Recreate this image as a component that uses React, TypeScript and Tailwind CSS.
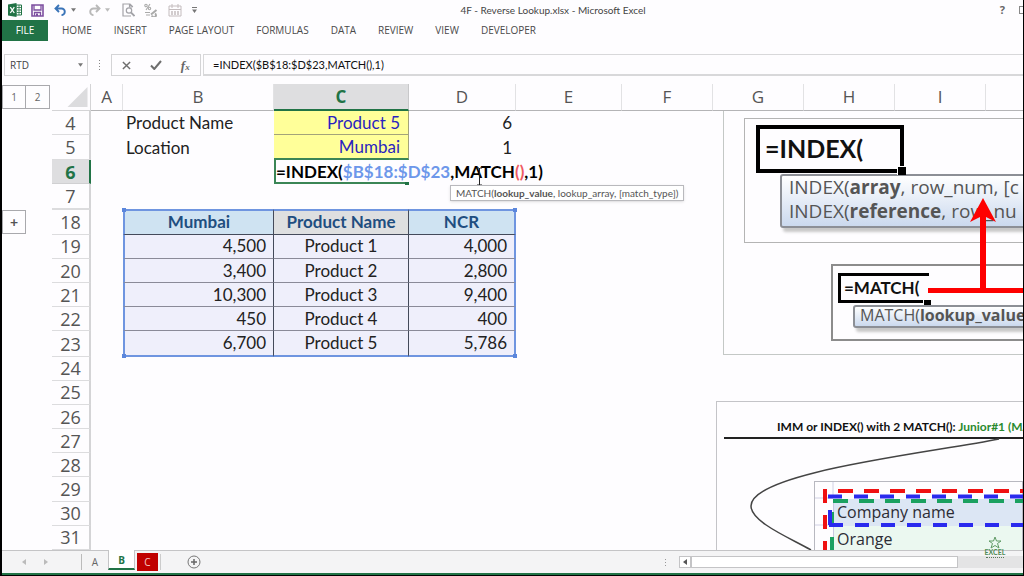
// src/App.tsx
import React, { useState } from "react";

const UI = "font-['Open_Sans','Noto_Sans',sans-serif]";
const CELL = "font-['Lato','Noto_Sans',sans-serif]";

const menus = ["HOME", "INSERT", "PAGE LAYOUT", "FORMULAS", "DATA", "REVIEW", "VIEW", "DEVELOPER"];

const columns = [
  { name: "A", width: "w-[32px]" },
  { name: "B", width: "w-[151px]" },
  { name: "C", width: "w-[135px]" },
  { name: "D", width: "w-[107px]" },
  { name: "E", width: "w-[106px]" },
  { name: "F", width: "w-[91px]" },
  { name: "G", width: "w-[91px]" },
  { name: "H", width: "w-[91px]" },
  { name: "I", width: "w-[91px]" },
];

const sales = [
  { row: 19, mumbai: "4,500", product: "Product 1", ncr: "4,000" },
  { row: 20, mumbai: "3,400", product: "Product 2", ncr: "2,800" },
  { row: 21, mumbai: "10,300", product: "Product 3", ncr: "9,400" },
  { row: 22, mumbai: "450", product: "Product 4", ncr: "400" },
  { row: 23, mumbai: "6,700", product: "Product 5", ncr: "5,786" },
];

const emptyRows = [24, 25, 26, 27, 28, 29, 30, 31];

function Caret({ className }: { className: string }) {
  return (
    <svg viewBox="0 0 6 4" className={`w-[5px] h-[4px] ${className}`}>
      <path d="M0 0h6L3 4z" fill="currentColor" />
    </svg>
  );
}

function QuickAccess() {
  return (
    <div className="w-[196px] shrink-0 flex items-center pl-[6px]">
      <svg viewBox="0 0 14 14" className="w-[14px] h-[14px] mr-[9px]">
        <path d="M8 2h5.500v10H8z" fill="#fff" stroke="#217346" strokeWidth="1" />
        <path d="M9 4.500h4M9 7h4M9 9.500h4M11 2v10" stroke="#217346" strokeWidth=".8" />
        <path d="M0 1.500L8.500 0v14L0 12.500z" fill="#217346" />
        <path d="M2.300 4.200l4 5.800M6.300 4.200l-4 5.800" stroke="#fff" strokeWidth="1.300" />
      </svg>
      <button aria-label="Save" className="mr-[10px]">
        <svg viewBox="0 0 13 13" className="w-[13px] h-[13px]">
          <path d="M1 1h11v11H1z" fill="#fff" stroke="#7d4fa0" strokeWidth="1.600" />
          <path d="M3 1v5h7V1M3.500 12V8.500h6V12" fill="none" stroke="#7d4fa0" strokeWidth="1.300" />
          <path d="M5 9.500h2V12H5z" fill="#7d4fa0" />
        </svg>
      </button>
      <button aria-label="Undo" className="flex items-center mr-[12px]">
        <svg viewBox="0 0 13 12" className="w-[13px] h-[12px]">
          <path d="M5 1L1.500 4.500L5 8M2 4.500h5.500a3.300 3.300 0 0 1 0 6.600" fill="none" stroke="#3a74b8" strokeWidth="1.900" />
        </svg>
        <Caret className="ml-[4px] text-[#777]" />
      </button>
      <button aria-label="Redo" className="flex items-center mr-[12px]">
        <svg viewBox="0 0 13 12" className="w-[13px] h-[12px]">
          <path d="M8 1l3.500 3.500L8 8M11 4.500H5.500a3.300 3.300 0 0 0 0 6.600" fill="none" stroke="#b9b9b9" strokeWidth="1.900" />
        </svg>
        <Caret className="ml-[4px] text-[#bbb]" />
      </button>
      <button aria-label="Print preview" className="mr-[9px]">
        <svg viewBox="0 0 13 14" className="w-[13px] h-[14px]" fill="none" stroke="#a3a3a8" strokeWidth="1.200">
          <path d="M10.500 4V3.500L8 1H1v12h8M7.500 1v3h3" />
          <circle cx="7" cy="7.500" r="2.700" />
          <path d="M9 9.500l3.500 3.500" strokeWidth="1.800" />
        </svg>
      </button>
      <button aria-label="Percent style" className="mr-[10px]">
        <svg viewBox="0 0 14 14" className="w-[14px] h-[14px]" fill="none" stroke="#aaa" strokeWidth="1.100">
          <circle cx="2" cy="2.500" r="1.200" />
          <circle cx="5.500" cy="5.500" r="1.200" />
          <path d="M6 1L2 7M1 9.500h5M2 12h4" />
          <path d="M7 11.500L12.500 7M8 12.500a2 2 0 1 0 3-2" strokeWidth="2" />
        </svg>
      </button>
      <button aria-label="Calendar" className="mr-[10px]">
        <svg viewBox="0 0 14 13" className="w-[14px] h-[13px]" fill="none" stroke="#c4bcbe">
          <path d="M1 2h12v10H1zM1 5.500h12M4 0v4M10 0v4" />
          <path d="M3 8h2M6 8h2M9 8h2M3 10h2M6 10h2M9 10h2" strokeWidth="1.300" />
        </svg>
      </button>
      <button aria-label="Customize toolbar">
        <svg viewBox="0 0 5 6" className="w-[5px] h-[6px]">
          <path d="M0 0h5v1H0zM0 2.500h5L2.500 6z" fill="#777" />
        </svg>
      </button>
    </div>
  );
}

function TitleBar() {
  return (
    <header className="h-[20px] shrink-0 flex items-center text-[10px] text-[#444]">
      <QuickAccess />
      <h1 className={`flex-1 text-center ${CELL}`}>4F - Reverse Lookup.xlsx - Microsoft Excel</h1>
      <div className="w-[115px] shrink-0 flex justify-end items-center gap-[14px] overflow-hidden">
        <button aria-label="Help" className="text-[11px] font-bold text-[#666]">?</button>
        <button aria-label="Ribbon display" className="w-[4px] h-[8px] border border-r-0 border-[#888]" />
      </div>
    </header>
  );
}

function Ribbon() {
  return (
    <nav className="h-[21px] shrink-0 flex items-stretch text-[10px] text-[#4a4a4a]">
      <button className="w-[46px] bg-[#217346] text-white">FILE</button>
      <div className="flex pl-[3px]">
        {menus.map((m) => (
          <button key={m} className="px-[11px] whitespace-nowrap">
            {m}
          </button>
        ))}
      </div>
    </nav>
  );
}

function FormulaBar() {
  const [formula, setFormula] = useState("=INDEX($B$18:$D$23,MATCH(),1)");
  return (
    <div className="h-[22px] mt-[13px] mb-[8px] shrink-0 flex items-stretch text-[11px] text-[#444]">
      <div className="ml-[2px] w-[84px] flex items-center border border-[#d4d4d6] pr-1">
        <input aria-label="Name box" defaultValue="RTD" className="min-w-0 flex-1 pl-[5px] text-[10px] outline-none" />
        <button aria-label="Open name list">
          <Caret className="text-[#777]" />
        </button>
      </div>
      <div className="w-[23px] flex flex-col items-center justify-center gap-[2px]">
        <i className="size-px bg-[#888]" />
        <i className="size-px bg-[#888]" />
        <i className="size-px bg-[#888]" />
        <i className="size-px bg-[#888]" />
      </div>
      <div className="w-[90px] flex items-center justify-around px-[1px] border border-[#d4d4d6]">
        <button aria-label="Cancel">
          <svg viewBox="0 0 10 10" className="w-[9px] h-[9px]">
            <path d="M1 1l8 8M9 1L1 9" stroke="#6e6e6e" strokeWidth="1.600" />
          </svg>
        </button>
        <button aria-label="Enter">
          <svg viewBox="0 0 12 10" className="w-[12px] h-[10px]">
            <path d="M1 5.500L4.300 9L11 1" fill="none" stroke="#6e6e6e" strokeWidth="2" />
          </svg>
        </button>
        <button aria-label="Insert function" className="font-['Liberation_Serif',serif] italic font-bold text-[13px] leading-none text-[#666]">
          f<span className="text-[9px]">x</span>
        </button>
      </div>
      <input
        aria-label="Formula bar"
        value={formula}
        onChange={(e) => setFormula(e.target.value)}
        className="ml-[2px] flex-1 min-w-0 border border-r-0 border-b-2 border-[#d8d8da] pl-[9px] pt-px font-['Lato',sans-serif] text-[11px] text-[#111] outline-none"
      />
    </div>
  );
}

function RowHead({ n, active }: { n: number; active?: boolean }) {
  const outline = n === 18;
  return (
    <>
      <td className="p-0">
        {outline && (
          <button aria-label="Expand rows" className="block w-[24px] h-[24px] border border-[#a9a9ad] text-[14px] font-bold leading-none text-[#555]">
            +
          </button>
        )}
      </td>
      <th
        scope="row"
        className={`p-0 border-b text-center text-[18px] leading-[22px] ${UI} ${
          active
            ? "bg-[#dedee0] border-[#d0d0d2] border-r-2 border-r-[#217346] font-bold text-[#217346]"
            : "border-[#dcdcde] border-r-2 border-r-[#d4d4d6] font-normal text-[#555]"
        } ${outline ? "border-t" : ""}`}
      >
        {n}
      </th>
      <td className="p-0" />
    </>
  );
}

// Corner handle of the highlighted range
function Handle({ className }: { className: string }) {
  return <i className={`absolute size-[4px] bg-[#5b86dc] ${className}`} />;
}

function ActiveCell() {
  return (
    <div className="relative h-full flex items-center border-2 border-t-0 border-r-0 border-[#3b8656] pt-[2px] whitespace-nowrap font-bold text-[17px] leading-[20px] text-black">
      <span>=INDEX(</span>
      <span className="text-[#6d97ea]">$B$18:$D$23</span>
      <span>,MATCH</span>
      <span className="text-[#ef5a62]">()</span>
      <span>,1)</span>
      <i className="absolute -bottom-[3px] right-0 w-[4px] h-[3px] bg-[#217346]" />
      {/* I-beam */}
      <svg viewBox="0 0 7 19" className="absolute top-[7px] left-[200px] w-[7px] h-[19px]">
        <path d="M1 1h2l.5.5L4 1h2M3.500 1v17M1 18h2l.5-.5.5.5h2" fill="none" stroke="#222" />
      </svg>
      <div
        role="tooltip"
        className="absolute z-10 top-[25px] left-[174px] border border-[#b9b9bd] bg-white px-[5px] shadow-sm font-normal text-[10px] leading-[14px] text-[#555]"
      >
        MATCH(<b>lookup_value</b>, lookup_array, [match_type])
      </div>
    </div>
  );
}

function Sheet() {
  return (
    <table className="w-full h-full table-fixed border-separate border-spacing-0">
      <colgroup>
        <col className="w-[50px]" />
        <col className="w-[39px]" />
        {columns.map((c) => (
          <col key={c.name} className={c.width} />
        ))}
        <col />
      </colgroup>
      <thead className={UI}>
        <tr className="h-[27px]">
          <th className="p-0 align-top">
            <div className="flex pt-px text-[10px] font-normal text-[#666]">
              <button className="w-[24px] h-[24px] border border-[#a9a9ad]">1</button>
              <button className="w-[24px] h-[24px] border border-l-0 border-[#a9a9ad]">2</button>
            </div>
          </th>
          <th className="p-0 border-b border-r border-[#d4d4d6]">
            <svg viewBox="0 0 20 20" className="ml-auto mr-[2px] w-[21px] h-[20px]">
              <path d="M20 0v20H0z" fill="#dcdcde" />
            </svg>
          </th>
          {columns.map((c) => (
            <th
              key={c.name}
              scope="col"
              className={`p-0 border-r text-[17px] leading-[24px] ${
                c.name === "C"
                  ? "bg-[#dedee0] border-r-[#c8c8ca] border-b-2 border-b-[#217346] font-bold text-[#217346]"
                  : "border-r-[#e2e2e4] border-b border-b-[#b4b4b6] font-normal text-[#555]"
              }`}
            >
              {c.name}
            </th>
          ))}
          <th className="p-0 border-b border-[#b4b4b6]" />
        </tr>
      </thead>
      <tbody className={`${CELL} text-[17px] leading-[22px] text-[#222]`}>
        <tr>
          <RowHead n={4} />
          <td className="p-0 pl-[3px]">Product Name</td>
          <td className="p-0 pr-[8px] border-b border-r border-[#a3a37a] bg-[#ffff99] text-right text-[#2a1fc0]">Product 5</td>
          <td className="p-0 pr-[4px] text-right">6</td>
        </tr>
        <tr>
          <RowHead n={5} />
          <td className="p-0 pl-[3px]">Location</td>
          <td className="p-0 pr-[8px] border-b-2 border-r border-r-[#a3a37a] border-b-[#3b8656] bg-[#ffff99] text-right text-[#2a1fc0]">Mumbai</td>
          <td className="p-0 pr-[4px] text-right">1</td>
        </tr>
        <tr>
          <RowHead n={6} active />
          <td className="p-0" />
          <td className="p-0 h-px">
            <ActiveCell />
          </td>
        </tr>
        <tr>
          <RowHead n={7} />
        </tr>
        <tr className="font-bold text-[#1f4e80] text-center">
          <RowHead n={18} />
          <td className="relative p-0 border-2 border-r border-[#6f95e0] border-b border-b-[#444a5a] border-r-[#444a5a] bg-[#cfe3f2]">
            Mumbai
            <Handle className="-top-[3px] -left-[3px]" />
          </td>
          <td className="p-0 border-t-2 border-t-[#6f95e0] border-b border-r border-[#444a5a] bg-[#dedfe0]">Product Name</td>
          <td className="relative p-0 border-2 border-l-0 border-[#6f95e0] border-b border-b-[#444a5a] bg-[#cfe3f2]">
            NCR
            <Handle className="-top-[3px] -right-[3px]" />
          </td>
        </tr>
        {sales.map((s) => {
          const last = s.row === 23;
          const bottom = last ? "border-b-2 border-b-[#6f95e0]" : "border-b border-b-[#8a8a98]";
          return (
            <tr key={s.row} className="[&>td]:nth-[n+4]:bg-[#efeffb]">
              <RowHead n={s.row} />
              <td className={`relative p-0 pr-[7px] text-right border-l-2 border-l-[#6f95e0] border-r border-r-[#444a5a] ${bottom}`}>
                {s.mumbai}
                {last && <Handle className="-bottom-[3px] -left-[3px]" />}
              </td>
              <td className={`p-0 text-center border-r border-r-[#444a5a] ${bottom}`}>{s.product}</td>
              <td className={`relative p-0 pr-[7px] text-right border-r-2 border-r-[#6f95e0] ${bottom}`}>
                {s.ncr}
                {last && <Handle className="-bottom-[3px] -right-[3px]" />}
              </td>
            </tr>
          );
        })}
        {emptyRows.map((n) => (
          <tr key={n}>
            <RowHead n={n} />
          </tr>
        ))}
      </tbody>
    </table>
  );
}

// Floating picture: INDEX and MATCH syntax hints
function SyntaxPicture() {
  return (
    <div className={`absolute left-[721px] right-0 top-[27px] h-[244px] overflow-hidden border border-r-0 border-t-0 border-[#c4c8c6] whitespace-nowrap text-[#555] ${UI}`}>
      <div className="ml-[20px] mt-[7px] h-[125px] border border-r-0 border-[#b4b4b4] pl-[11px] pt-[6px]">
        <div className="relative w-[148px] h-[48px] border-4 border-black pl-[5px] font-['Lato',sans-serif] font-bold text-[25px] leading-[38px] text-[#111]">
          =INDEX(
          <i className="absolute -right-[6px] -bottom-[6px] size-[9px] bg-black border-l border-t border-white" />
        </div>
        <div className="ml-[24px] mt-px w-[400px] h-[54px] rounded-[3px] border-2 border-[#8c8f96] bg-gradient-to-b from-white to-[#cbd9ee] pl-[7px] text-[19px] leading-[24px] shadow-[3px_4px_3px_#c8c8c8]">
          <p className="-mt-px">INDEX(<b>array</b>, row_num, [c</p>
          <p>INDEX(<b>reference</b>, row_nu</p>
        </div>
      </div>
      <div className="ml-[107px] mt-[21px] h-[77px] border-2 border-r-0 border-[#8c8c8c] pl-[5px] pt-[7px]">
        <div className="relative w-[91px] h-[30px] border-[3px] border-r-0 border-black pl-[3px] font-['Lato',sans-serif] font-bold text-[17px] leading-[24px] text-[#111]">
          =MATCH(
          <i className="absolute -right-[2px] -bottom-[5px] w-[8px] h-[5px] bg-black border-l border-white" />
        </div>
        <div className="ml-[15px] mt-[2px] w-[400px] h-[23px] rounded-[3px] border-2 border-[#8c8f96] bg-gradient-to-b from-white to-[#cbd9ee] pl-[5px] text-[16px] leading-[16px] shadow-[3px_4px_3px_#c8c8c8]">
          MATCH(<b>lookup_value</b>
        </div>
      </div>
      <svg viewBox="0 0 300 244" className="absolute top-0 left-0 w-[300px] h-[244px]" fill="#fe0000">
        <path d="M259 87l13 24l-10-5v71h38v5h-96v-5h52v-71l-10 5z" />
      </svg>
    </div>
  );
}

// Floating picture: two-way lookup sketch, cut off by the tab bar
function LookupPicture() {
  return (
    <div className="absolute left-[714px] right-0 top-[317px] bottom-0 overflow-hidden border border-r-0 border-b-0 border-[#c4c4c8] whitespace-nowrap">
      <p className="pl-[60px] pt-[16px] font-['Lato',sans-serif] font-bold text-[12px] leading-[18px] text-[#111]">
        IMM or INDEX() with 2 MATCH(): <span className="text-[#2a8a2e]">Junior#1 (MA</span>
      </p>
      <div className="ml-[97px] mt-[45px] pl-[18px] border border-[#b8b8c0] pt-[17px] font-['Open_Sans',sans-serif] text-[16px] text-[#2c2c34]">
        <p className="h-[27px] border-l border-[#c8c8e0] bg-[#dce6f4] pl-[3px] leading-[26px]">Company name</p>
        <p className="h-[27px] border-l border-[#c8c8e0] bg-[#ebf8f0] pl-[3px] leading-[26px]">Orange</p>
      </div>
      <svg viewBox="716 401 310 150" className="absolute -top-px -left-px w-[310px] h-[150px]" fill="none">
        <path d="M724 438h302" stroke="#222" strokeWidth="2" />
        <path d="M999 439C930 453 751 472 751 506C751 522 790 538 811 550" stroke="#444" strokeWidth="1.500" />
        <path d="M815 498h18M815 525h18M833 482v16" stroke="#d0d0e4" />
        <path d="M838 491h188" stroke="#ef1111" strokeWidth="4" strokeDasharray="15 11" />
        <path d="M827 491h-2v12M825 515v14M825 541v12" stroke="#ef1111" strokeWidth="4" />
        <path d="M833 501h193" stroke="#1ba160" strokeWidth="4" strokeDasharray="15 11" />
        <path d="M832 512v12M832 537v15" stroke="#1ba160" strokeWidth="4" />
        <path d="M828 496.500h198M829 525h197" stroke="#2a2aee" strokeWidth="4" strokeDasharray="14 12" />
        <path d="M830 510v15" stroke="#2a2aee" strokeWidth="4" />
      </svg>
    </div>
  );
}

function TabBar() {
  return (
    <footer className="relative h-[23px] shrink-0 flex items-stretch border-t border-[#c4c4c6] bg-[#f4f4f5] text-[10px] text-[#666]">
      <div className="w-[80px] flex items-center pl-[20px] gap-[18px] border-r border-[#bbb] my-[3px]">
        <button aria-label="Previous sheet">
          <svg viewBox="0 0 4 6" className="w-[4px] h-[6px]"><path d="M4 0v6L0 3z" fill="#bbb" /></svg>
        </button>
        <button aria-label="Next sheet">
          <svg viewBox="0 0 4 6" className="w-[4px] h-[6px]"><path d="M0 0v6l4-3z" fill="#bbb" /></svg>
        </button>
      </div>
      <button className="w-[26px]">A</button>
      <button className="w-[27px] -mt-px mb-[3px] pt-[3px] border-x border-b-2 border-x-[#c4c4c6] border-b-[#217346] bg-white font-bold text-[#217346]">B</button>
      <button className="w-[21px] ml-[2px] mt-[2px] mb-[2px] bg-[#c00000] text-[#f4c8c8]">C</button>
      <i className="ml-[2px] my-[3px] w-px bg-[#ccc]" />
      <button aria-label="New sheet" className="ml-[26px]">
        <svg viewBox="0 0 14 14" className="w-[14px] h-[14px]">
          <circle cx="7" cy="7" r="6" fill="none" stroke="#777" />
          <path d="M7 4v6M4 7h6" stroke="#666" strokeWidth="1.500" />
        </svg>
      </button>
      <div className="ml-auto w-[358px] flex items-center">
        <div className="w-[14px] flex flex-col gap-[2px]">
          <i className="size-px bg-[#999]" />
          <i className="size-px bg-[#999]" />
          <i className="size-px bg-[#999]" />
        </div>
        <div className="flex-1 flex bg-[#e4e4e5]">
          <button aria-label="Scroll left" className="w-[12px] h-[12px] border border-[#c4c4c6] bg-white grid place-items-center">
            <svg viewBox="0 0 4 6" className="w-[4px] h-[6px]"><path d="M4 0v6L0 3z" fill="#555" /></svg>
          </button>
          <div className="w-[267px] h-[12px] border border-[#c4c4c6] bg-white" />
        </div>
      </div>
      {/* Channel watermark */}
      <div className="absolute right-[17px] -top-[15px] w-[22px] flex flex-col items-center text-[#4f8c55]">
        <svg viewBox="0 0 14 13" className="w-[14px] h-[13px]" fill="none" stroke="#5f9a64">
          <path d="M7 1l1.500 4H13L9.500 7.500L11 12L7 9.500L3 12l1.500-4.500L1 5h4.500z" />
        </svg>
        <span className="font-['Lato',sans-serif] font-bold text-[7px] leading-[7px]">EXCEL</span>
        <i className="mt-px w-[18px] border-t border-dotted border-[#5a7a5c]" />
      </div>
    </footer>
  );
}

export default function App() {
  return (
    <div className={`h-screen flex flex-col overflow-hidden border-l-2 border-r border-b border-black bg-[#fefdff] ${UI}`}>
      <TitleBar />
      <Ribbon />
      <FormulaBar />
      <main className="relative flex-1 min-h-0 overflow-hidden">
        <Sheet />
        <SyntaxPicture />
        <LookupPicture />
      </main>
      <TabBar />
      <div className="h-[2px] shrink-0 bg-[#217346]" />
    </div>
  );
}
